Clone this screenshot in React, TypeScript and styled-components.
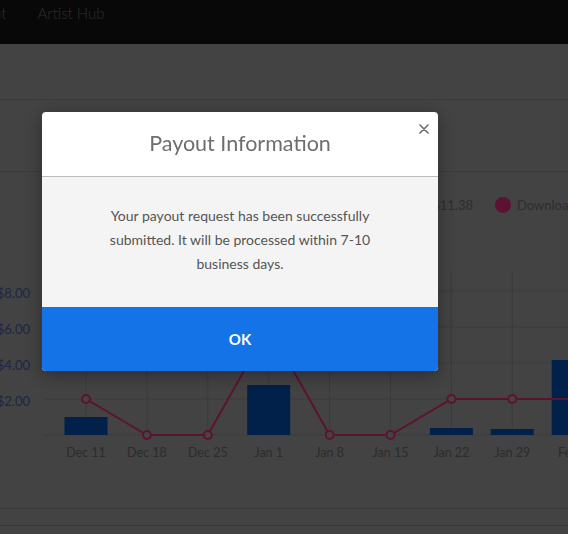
import styled, { createGlobalStyle } from "styled-components";

const GlobalStyle = createGlobalStyle`
  html, body {
    margin: 0;
    padding: 0;
    width: 568px;
    height: 534px;
    overflow: hidden;
    background: #868686;
    font-family: Lato, "Open Sans", sans-serif;
  }
`;

const Page = styled.div`
  width: 568px;
  height: 534px;
  overflow: hidden;
  background: #868686;
`;

const NavBar = styled.header`
  height: 44px;
  background: #101010;
  display: flex;
  align-items: flex-start;
  overflow: hidden;
`;

const NavList = styled.nav`
  display: flex;
  gap: 31px;
  margin-left: -47px;
  padding-top: 4px;
`;

const NavItem = styled.span`
  color: #5e5e5e;
  font-size: 15px;
  font-weight: 300;
  white-space: nowrap;
`;

const Section = styled.section<{ $h: number }>`
  height: ${(p) => p.$h}px;
  border-bottom: 1px solid #767676;
`;

const ChartCard = styled.section`
  height: 336px;
  border-bottom: 1px solid #707070;
  display: flex;
  flex-direction: column;
`;

const LegendRow = styled.div`
  display: flex;
  gap: 22px;
  padding: 25px 0 0 355px;
  white-space: nowrap;
`;

const LegendItem = styled.div`
  display: flex;
  align-items: center;
  gap: 6px;
  color: #5c5c5c;
  font-size: 13px;
`;

const Dot = styled.span<{ $c: string }>`
  width: 16px;
  height: 16px;
  border-radius: 50%;
  background: ${(p) => p.$c};
`;

const ChartSvg = styled.svg`
  display: block;
  margin-top: 38px;
  overflow: hidden;
`;

const Footer = styled.div`
  height: 16px;
  border-bottom: 1px solid #707070;
`;

const Backdrop = styled.div`
  position: fixed;
  inset: 0;
  background: rgba(0, 0, 0, 0.5);
  padding: 112px 0 0 42px;
`;

const Modal = styled.div`
  width: 396px;
  border-radius: 4px;
  background: #fff;
  box-shadow: 0 4px 18px rgba(0, 0, 0, 0.35);
  display: flex;
  flex-direction: column;
`;

const ModalHeader = styled.div`
  position: relative;
  height: 64px;
  border-bottom: 1px solid #bdbdbd;
  display: flex;
  align-items: center;
  justify-content: center;
`;

const Title = styled.h2`
  margin: 0 0 3px;
  font-size: 21.5px;
  font-weight: 400;
  color: #6e6e6e;
`;

const CloseButton = styled.button`
  position: absolute;
  top: 9px;
  right: 6px;
  width: 16px;
  height: 16px;
  padding: 0;
  border: 0;
  background: none;
  display: flex;
  align-items: center;
  justify-content: center;
  cursor: pointer;
`;

const ModalBody = styled.div`
  background: #f4f4f4;
  padding: 27px 40px 31px;
  display: flex;
  justify-content: center;
`;

const Message = styled.p`
  margin: 0;
  max-width: 275px;
  text-align: center;
  font-size: 14px;
  line-height: 24px;
  color: #555;
`;

const OkButton = styled.button`
  height: 64px;
  border: 0;
  border-radius: 0 0 4px 4px;
  background: #1473e6;
  color: #fff;
  font-family: Lato, sans-serif;
  font-size: 15px;
  font-weight: 700;
  cursor: pointer;
`;

const labels = ["Dec 11", "Dec 18", "Dec 25", "Jan 1", "Jan 8", "Jan 15", "Jan 22", "Jan 29", "Feb 5"];
const bars = [18, 0, 0, 50, 0, 0, 7, 6, 75];
const points = [36, 0, 0, 108, 0, 0, 36, 36, 36];
const xs = labels.map((_, i) => 86 + i * 60.9);
const base = 184;
const yTicks = ["$2.00", "$4.00", "$6.00", "$8.00"];

const Chart = () => (
  <ChartSvg width={568} height={230}>
    {yTicks.map((t, i) => {
      const y = base - (i + 1) * 36;
      return (
        <g key={t}>
          <line x1={43} x2={620} y1={y} y2={y} stroke="#767676" strokeWidth={1} />
          <text x={30} y={y + 4} textAnchor="end" dominantBaseline="middle" fontSize={13} fill="#3a4d8c" fontFamily="Lato, sans-serif">
            {t}
          </text>
        </g>
      );
    })}
    <line x1={43} x2={620} y1={base} y2={base} stroke="#767676" />
    {xs.map((x, i) => (
      <g key={labels[i]}>
        <line x1={x} x2={x} y1={20} y2={base} stroke="#767676" />
        <text x={x} y={203} textAnchor="middle" dominantBaseline="middle" fontSize={12.5} fill="#585858" fontFamily="Lato, sans-serif">
          {labels[i]}
        </text>
      </g>
    ))}
    {xs.map((x, i) =>
      bars[i] > 0 ? (
        <rect key={"b" + i} x={x - 21.5} y={base - bars[i]} width={43} height={bars[i]} fill="#044294" />
      ) : null
    )}
    <polyline
      points={xs.map((x, i) => `${x},${base - points[i]}`).join(" ")}
      fill="none"
      stroke="#b82662"
      strokeWidth={2}
    />
    {xs.map((x, i) => (
      <circle key={"p" + i} cx={x} cy={base - points[i]} r={4} fill="#868686" stroke="#b82662" strokeWidth={2} />
    ))}
  </ChartSvg>
);

export default function App() {
  return (
    <>
      <GlobalStyle />
      <Page>
        <NavBar>
          <NavList>
            <NavItem>Account</NavItem>
            <NavItem>Artist Hub</NavItem>
          </NavList>
        </NavBar>
        <Section $h={55} />
        <Section $h={71} />
        <ChartCard>
          <LegendRow>
            <LegendItem>
              <Dot $c="#044294" />
              Earnings: $11.38
            </LegendItem>
            <LegendItem>
              <Dot $c="#b82662" />
              Downloads: 24
            </LegendItem>
          </LegendRow>
          <Chart />
        </ChartCard>
        <Footer />
      </Page>
      <Backdrop>
        <Modal role="dialog">
          <ModalHeader>
            <Title>Payout Information</Title>
            <CloseButton aria-label="Close">
              <svg width="10" height="10" viewBox="0 0 10 10">
                <path d="M1 1L9 9M9 1L1 9" stroke="#6a6a6a" strokeWidth="1.6" strokeLinecap="round" />
              </svg>
            </CloseButton>
          </ModalHeader>
          <ModalBody>
            <Message>
              Your payout request has been successfully submitted. It will be processed within 7-10 business days.
            </Message>
          </ModalBody>
          <OkButton>OK</OkButton>
        </Modal>
      </Backdrop>
    </>
  );
}
